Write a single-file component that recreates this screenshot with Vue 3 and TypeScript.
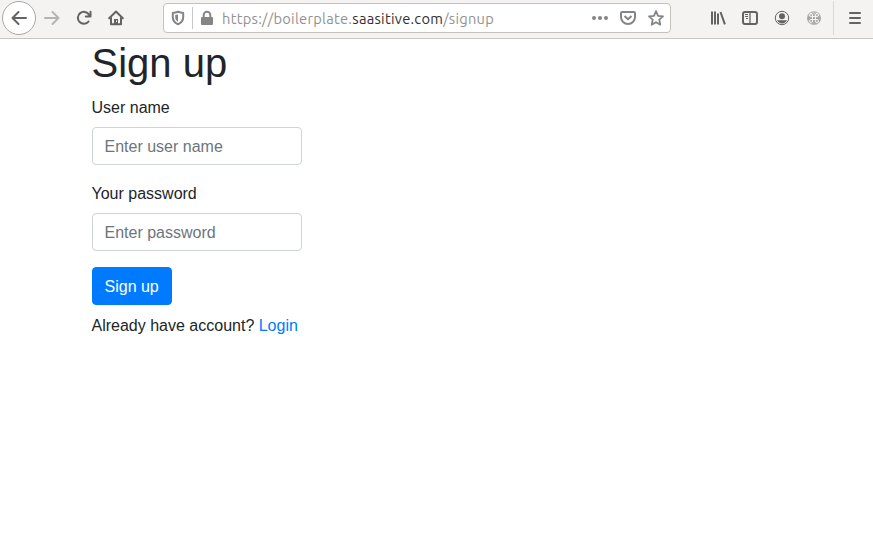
<script setup lang="ts">
import { ref } from 'vue'

const userName = ref('')
const password = ref('')
</script>

<template>
  <div class="browser">
    <header class="toolbar">
      <button class="tool back" aria-label="Back">
        <svg viewBox="0 0 16 16"><path class="round" d="M15 8H1.500M7.500 2l-6 6 6 6" /></svg>
      </button>
      <button class="tool disabled" aria-label="Forward">
        <svg viewBox="0 0 16 16"><path class="round" d="M1 8h13.500M8.500 2l6 6-6 6" /></svg>
      </button>
      <button class="tool" aria-label="Reload">
        <svg viewBox="0 0 16 16"><path class="round" d="M12.600 11.500A6 6 0 1 1 13 4.700M14.500 1.800v4.700H9.800" /></svg>
      </button>
      <button class="tool" aria-label="Home">
        <svg viewBox="0 0 16 16"><path class="round" d="M1.200 8.300 8 1.500l6.800 6.800M3 8v6.200h10V8" /><path class="fill" d="M6 9h4v5H6z" /><path class="hole" d="M8.500 10.500v1.500" /></svg>
      </button>

      <div class="urlbar">
        <span class="slot shield">
          <svg viewBox="0 0 16 16"><path d="M8 1.800c2 .7 3.500 1 5.200 1.200v4c0 3.500-2 6-5.200 7.200C4.800 13 2.800 10.500 2.800 7V3C4.500 2.800 6 2.500 8 1.800z" /><path class="fill" d="M8 4.200v7.500C6 10.800 5.200 9 5.200 7V4.900C6.200 4.800 7 4.600 8 4.200z" /></svg>
        </span>
        <span class="separator"></span>
        <span class="slot lock">
          <svg viewBox="0 0 16 16"><path d="M4.700 8V5a3.300 3.300 0 0 1 6.600 0v3" /><rect class="fill" x="2" y="7" width="12" height="8" rx="1" /></svg>
        </span>
        <span class="url">https://boilerplate.<b>saasitive.com</b>/signup</span>
        <span class="slot">
          <svg viewBox="0 0 16 16"><g class="fill"><circle cx="2" cy="8" r="2" /><circle cx="8" cy="8" r="2" /><circle cx="14" cy="8" r="2" /></g></svg>
        </span>
        <span class="slot">
          <svg viewBox="0 0 16 16"><path d="M2.300 2h11.400c.8 0 1.300.5 1.300 1.300v4a7 6.700 0 0 1-14 0v-4C1 2.500 1.500 2 2.300 2zM4.500 6 8 9.300 11.500 6" /></svg>
        </span>
        <span class="slot">
          <svg viewBox="0 0 16 16"><path class="star" d="m8 1.200 2 4.600 5 .5-3.700 3.400 1 5L8 12.200l-4.300 2.500 1-5L1 6.300l5-.5z" /></svg>
        </span>
      </div>

      <div class="tools">
        <button class="tool" aria-label="Library">
          <svg viewBox="0 0 16 16"><path d="M2 1.500v13M5 1.500v13M8 3.500v11M10.500 2l4.400 12.300" /></svg>
        </button>
        <button class="tool" aria-label="Sidebar">
          <svg viewBox="0 0 16 16"><rect x="1" y="2" width="14" height="12" rx="2" /><path d="M8 2v12" class="thin" /><path class="line" d="M3 4.500h3M3 6.500h3M4 8.500h2" /></svg>
        </button>
        <button class="tool" aria-label="Account">
          <svg viewBox="0 0 16 16"><circle class="line" cx="8" cy="8" r="6.700" /><circle class="fill" cx="8" cy="6.200" r="3" /><path class="fill" d="M3 10.200h10c-1 2-2.700 3.200-5 3.200S4 12.200 3 10.200z" /></svg>
        </button>
        <button class="tool" aria-label="Keyboard extension">
          <svg viewBox="0 0 16 16"><defs><linearGradient id="badge" x2="0" y2="1"><stop stop-color="#c8c7c6" /><stop offset=".5" stop-color="#a4a4a4" /><stop offset="1" stop-color="#b4b3b2" /></linearGradient></defs><circle cx="8" cy="8" r="7" fill="url(#badge)" stroke="none" /><path class="command" d="M6.500 6.500h3v3h-3zM6.500 6.500H5A1.500 1.500 0 1 1 6.500 5zM9.500 6.500V5A1.500 1.500 0 1 1 11 6.500zM9.500 9.500H11A1.500 1.500 0 1 1 9.500 11zM6.500 9.500V11A1.500 1.500 0 1 1 5 9.500z" /></svg>
        </button>
        <span class="divider"></span>
        <button class="tool" aria-label="Menu">
          <svg viewBox="0 0 16 16"><path class="round" d="M3 3h10M3 8h10M3 13h10" /></svg>
        </button>
      </div>
    </header>

    <main class="container">
      <form class="column" @submit.prevent>
        <h1>Sign up</h1>
        <div class="group">
          <label for="user">User name</label>
          <input id="user" v-model="userName" type="text" placeholder="Enter user name" />
        </div>
        <div class="group">
          <label for="password">Your password</label>
          <input id="password" v-model="password" type="password" placeholder="Enter password" />
        </div>
        <button class="submit" type="submit">Sign up</button>
        <p>Already have account? <a href="#">Login</a></p>
      </form>
    </main>
  </div>
</template>

<style>
body {
  margin: 0;
  background: #fff;
}
</style>

<style scoped>
* {
  box-sizing: border-box;
}
.browser {
  min-height: 534px;
  font: 16px/24px "Liberation Sans", Arial, sans-serif;
  color: #212529;
}
.toolbar {
  display: flex;
  align-items: center;
  height: 39px;
  padding: 0 2px 2px;
  background: #f4f3f2;
  border-bottom: 1px solid #cac5c1;
}
.tool {
  display: flex;
  align-items: center;
  justify-content: center;
  flex: none;
  width: 32px;
  height: 32px;
  padding: 0;
  border: 0;
  background: none;
  color: #646362;
}
.back {
  width: 34px;
  height: 34px;
  border: 1px solid #aaa8a6;
  border-radius: 50%;
  background: #fff;
}
.disabled {
  color: #b5b4b3;
}
svg {
  display: block;
  width: 16px;
  height: 16px;
  fill: none;
  stroke: currentColor;
  stroke-width: 2;
  stroke-linejoin: round;
}
.round {
  stroke-linecap: round;
}
.fill {
  fill: currentColor;
  stroke: none;
}
.thin {
  stroke-width: 1.3;
}
.star {
  stroke-width: 1.8;
}
.line {
  stroke-width: 1;
}
.hole {
  stroke: #f4f3f2;
  stroke-width: 1;
}
.command {
  stroke: #f4f3f2;
  stroke-width: 1;
}
.urlbar {
  display: flex;
  align-items: center;
  width: 508px;
  height: 30px;
  margin-left: 31px;
  border: 1px solid #c5c1bd;
  border-radius: 4px;
  background: #fff;
  color: #858585;
}
.slot {
  display: flex;
  justify-content: center;
  flex: none;
  width: 28px;
}
.separator {
  width: 1px;
  height: 22px;
  background: #c8c8c8;
}
.lock {
  width: 27px;
}
.url {
  flex: 1;
  padding: 1px 0 0 2px;
  font: 14.67px/20px Ubuntu, "Noto Sans", sans-serif;
  letter-spacing: 0.27px;
  color: #929292;
  white-space: nowrap;
}
.url b {
  font-weight: 400;
  color: #303030;
}
.tools {
  display: flex;
  align-items: center;
  margin-left: auto;
}
.divider {
  width: 1px;
  height: 34px;
  margin: 0 5px 0 3px;
  background: #dad8d6;
}
.container {
  width: 720px;
  margin: 0 auto;
  padding: 0 15px;
}
.column {
  width: 210px;
}
h1 {
  margin: 0 0 8px;
  font-size: 40px;
  font-weight: 400;
  line-height: 48px;
}
.group {
  margin-bottom: 16px;
}
label {
  display: block;
  margin-bottom: 6px;
  line-height: 26px;
}
input {
  display: block;
  width: 100%;
  height: 38px;
  padding: 7px 12px 5px;
  border: 1px solid #ced4da;
  border-radius: 4px;
  background: #fff;
  color: #495057;
  font: inherit;
}
input::placeholder {
  color: #6c757d;
  opacity: 1;
}
.submit {
  display: block;
  height: 38px;
  padding: 7px 12px 5px;
  border: 1px solid #007bff;
  border-radius: 4px;
  background: #007bff;
  color: #fff;
  font: inherit;
}
p {
  margin: 9px 0 0;
}
a {
  color: #007bff;
  text-decoration: none;
}
</style>
